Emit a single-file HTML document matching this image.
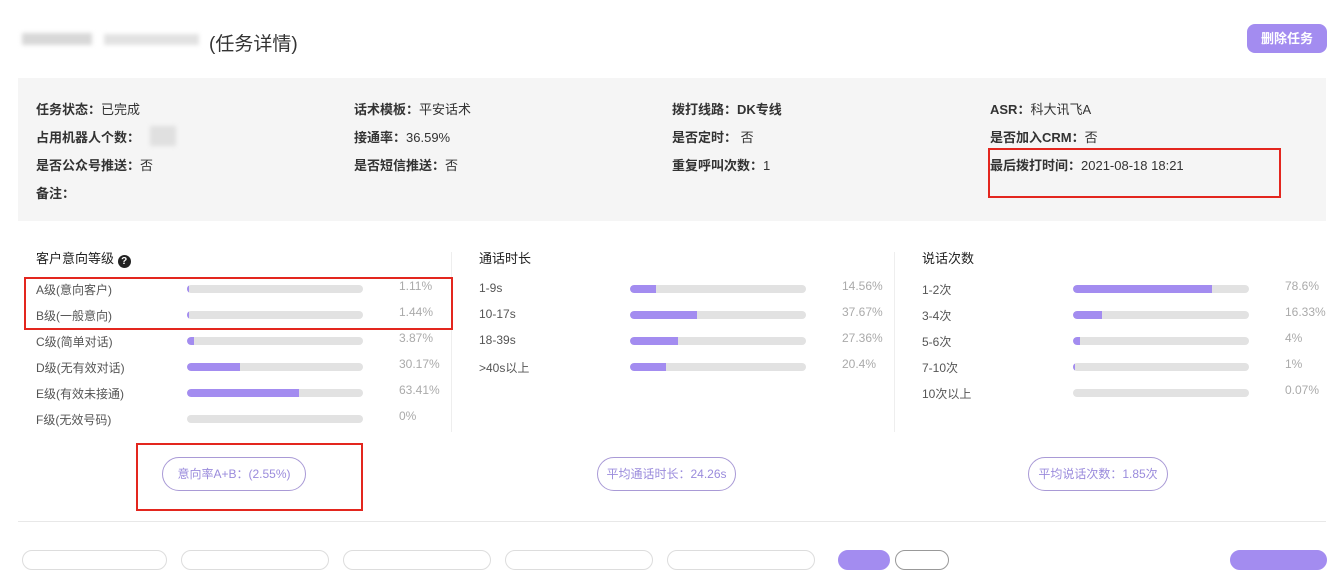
<!DOCTYPE html>
<html><head><meta charset="utf-8"><style>
*{margin:0;padding:0;box-sizing:border-box}
body{width:1342px;height:558px;overflow:hidden;background:#fff;font-family:"Liberation Sans","Noto Sans CJK SC",sans-serif;position:relative;color:#333}
.a{position:absolute;white-space:nowrap}
.blur{position:absolute;background:#d8d8d8;filter:blur(2px)}
.info{position:absolute;left:18px;top:78px;width:1308px;height:143px;background:#f5f5f5}
.lb{font-size:13px;color:#333}
.lb b{font-weight:bold}
.t{font-size:12px;color:#555}
.p{font-size:12px;color:#aaa}
.bar{position:absolute;height:8px;background:#e2e2e2;border-radius:4px;width:176px;overflow:hidden}
.bar i{display:block;height:100%;background:#a38cf0;border-radius:4px 0 0 4px}
.pill{position:absolute;height:34px;border:1px solid #a99ad6;border-radius:17px;color:#9a8bdc;font-size:12px;line-height:32px;text-align:center}
.red{position:absolute;border:2px solid #e3261e}
.inp{position:absolute;top:550px;height:20px;border:1px solid #ddd;border-radius:10px;background:#fff}
</style></head><body>
<div class="blur" style="left:22px;top:33px;width:70px;height:12px"></div>
<div class="blur" style="left:104px;top:34px;width:95px;height:11px;background:#e2e2e2"></div>
<div class="a" style="left:209px;top:29px;font-size:19px;color:#333">(任务详情)</div>
<div class="a" style="left:1247px;top:24px;width:80px;height:29px;background:#a38cf0;border-radius:8px;color:#fff;font-size:13px;line-height:29px;text-align:center;font-weight:bold">删除任务</div>

<div class="info"></div>
<div class="a lb" style="left:36px;top:99px"><b>任务状态：</b>已完成</div>
<div class="a lb" style="left:36px;top:127px"><b>占用机器人个数：</b></div>
<div class="blur" style="left:150px;top:126px;width:26px;height:20px;background:#e0e0e0"></div>
<div class="a lb" style="left:36px;top:155px"><b>是否公众号推送：</b>否</div>
<div class="a lb" style="left:36px;top:183px"><b>备注：</b></div>
<div class="a lb" style="left:354px;top:99px"><b>话术模板：</b>平安话术</div>
<div class="a lb" style="left:354px;top:127px"><b>接通率：</b>36.59%</div>
<div class="a lb" style="left:354px;top:155px"><b>是否短信推送：</b>否</div>
<div class="a lb" style="left:672px;top:99px"><b>拨打线路：DK专线</b></div>
<div class="a lb" style="left:672px;top:127px"><b>是否定时：</b> 否</div>
<div class="a lb" style="left:672px;top:155px"><b>重复呼叫次数：</b>1</div>
<div class="a lb" style="left:990px;top:99px"><b>ASR：</b>科大讯飞A</div>
<div class="a lb" style="left:990px;top:127px"><b>是否加入CRM：</b>否</div>
<div class="a lb" style="left:990px;top:155px"><b>最后拨打时间：</b>2021-08-18 18:21</div>

<div class="a" style="left:36px;top:248px;font-size:13px;color:#222">客户意向等级 <span style="display:inline-block;width:13px;height:13px;border-radius:50%;background:#222;color:#fff;font-size:10px;line-height:13px;text-align:center;font-weight:bold;vertical-align:-1px">?</span></div>
<div class="a" style="left:479px;top:248px;font-size:13px;color:#222">通话时长</div>
<div class="a" style="left:922px;top:248px;font-size:13px;color:#222">说话次数</div>
<div class="a" style="left:451px;top:252px;width:1px;height:180px;background:#eee"></div>
<div class="a" style="left:894px;top:252px;width:1px;height:180px;background:#eee"></div>

<div class="a t" style="left:36px;top:281px">A级(意向客户)</div><div class="bar" style="left:187px;top:285px"><i style="width:2px"></i></div><div class="a p" style="left:399px;top:279px">1.11%</div>
<div class="a t" style="left:36px;top:307px">B级(一般意向)</div><div class="bar" style="left:187px;top:311px"><i style="width:2px"></i></div><div class="a p" style="left:399px;top:305px">1.44%</div>
<div class="a t" style="left:36px;top:333px">C级(简单对话)</div><div class="bar" style="left:187px;top:337px"><i style="width:7px"></i></div><div class="a p" style="left:399px;top:331px">3.87%</div>
<div class="a t" style="left:36px;top:359px">D级(无有效对话)</div><div class="bar" style="left:187px;top:363px"><i style="width:53px"></i></div><div class="a p" style="left:399px;top:357px">30.17%</div>
<div class="a t" style="left:36px;top:385px">E级(有效未接通)</div><div class="bar" style="left:187px;top:389px"><i style="width:112px"></i></div><div class="a p" style="left:399px;top:383px">63.41%</div>
<div class="a t" style="left:36px;top:411px">F级(无效号码)</div><div class="bar" style="left:187px;top:415px"></div><div class="a p" style="left:399px;top:409px">0%</div>

<div class="a t" style="left:479px;top:281px">1-9s</div><div class="bar" style="left:630px;top:285px"><i style="width:26px"></i></div><div class="a p" style="left:842px;top:279px">14.56%</div>
<div class="a t" style="left:479px;top:307px">10-17s</div><div class="bar" style="left:630px;top:311px"><i style="width:67px"></i></div><div class="a p" style="left:842px;top:305px">37.67%</div>
<div class="a t" style="left:479px;top:333px">18-39s</div><div class="bar" style="left:630px;top:337px"><i style="width:48px"></i></div><div class="a p" style="left:842px;top:331px">27.36%</div>
<div class="a t" style="left:479px;top:359px">&gt;40s以上</div><div class="bar" style="left:630px;top:363px"><i style="width:36px"></i></div><div class="a p" style="left:842px;top:357px">20.4%</div>

<div class="a t" style="left:922px;top:281px">1-2次</div><div class="bar" style="left:1073px;top:285px"><i style="width:139px"></i></div><div class="a p" style="left:1285px;top:279px">78.6%</div>
<div class="a t" style="left:922px;top:307px">3-4次</div><div class="bar" style="left:1073px;top:311px"><i style="width:29px"></i></div><div class="a p" style="left:1285px;top:305px">16.33%</div>
<div class="a t" style="left:922px;top:333px">5-6次</div><div class="bar" style="left:1073px;top:337px"><i style="width:7px"></i></div><div class="a p" style="left:1285px;top:331px">4%</div>
<div class="a t" style="left:922px;top:359px">7-10次</div><div class="bar" style="left:1073px;top:363px"><i style="width:2px"></i></div><div class="a p" style="left:1285px;top:357px">1%</div>
<div class="a t" style="left:922px;top:385px">10次以上</div><div class="bar" style="left:1073px;top:389px"></div><div class="a p" style="left:1285px;top:383px">0.07%</div>

<div class="pill" style="left:162px;top:457px;width:144px">意向率A+B：(2.55%)</div>
<div class="pill" style="left:597px;top:457px;width:139px">平均通话时长：24.26s</div>
<div class="pill" style="left:1028px;top:457px;width:140px">平均说话次数：1.85次</div>

<div class="a" style="left:18px;top:521px;width:1308px;height:1px;background:#e8e8e8"></div>

<div class="inp" style="left:22px;width:145px"></div>
<div class="inp" style="left:181px;width:148px"></div>
<div class="inp" style="left:343px;width:148px"></div>
<div class="inp" style="left:505px;width:148px"></div>
<div class="inp" style="left:667px;width:148px"></div>
<div class="inp" style="left:838px;width:52px;background:#a38cf0;border-color:#a38cf0"></div>
<div class="inp" style="left:895px;width:54px;border-color:#999"></div>
<div class="inp" style="left:1230px;width:97px;background:#a38cf0;border-color:#a38cf0"></div>

<div class="red" style="left:988px;top:148px;width:293px;height:50px"></div>
<div class="red" style="left:24px;top:277px;width:429px;height:53px"></div>
<div class="red" style="left:136px;top:443px;width:227px;height:68px"></div>
</body></html>
